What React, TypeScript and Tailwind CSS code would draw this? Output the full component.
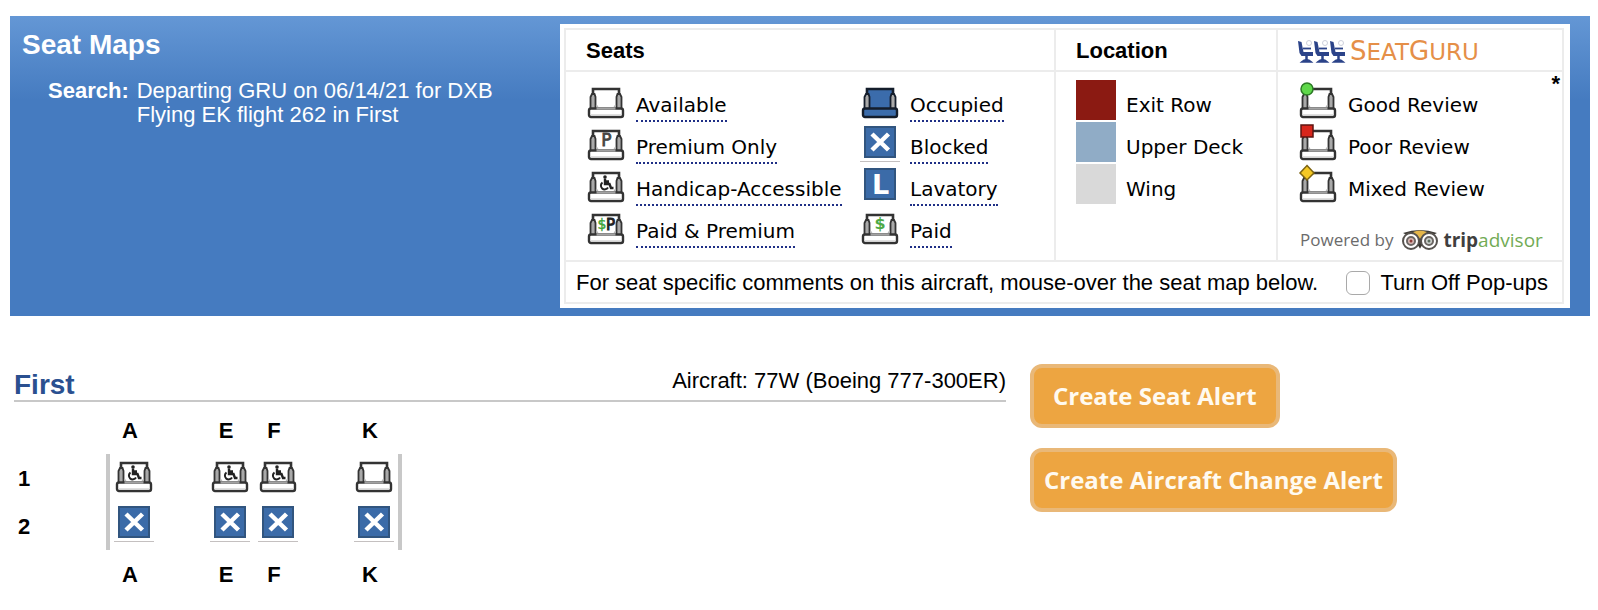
import { useState } from 'react';
import type { ReactNode } from 'react';

type Review = 'good' | 'poor' | 'mixed';
type SeatKind = 'available' | 'premium' | 'handicap' | 'paidPremium' | 'occupied' | 'blocked' | 'lavatory' | 'paid';

const seatLegend: { kind: SeatKind; label: string }[] = [
  { kind: 'available', label: 'Available' },
  { kind: 'occupied', label: 'Occupied' },
  { kind: 'premium', label: 'Premium Only' },
  { kind: 'blocked', label: 'Blocked' },
  { kind: 'handicap', label: 'Handicap-Accessible' },
  { kind: 'lavatory', label: 'Lavatory' },
  { kind: 'paidPremium', label: 'Paid & Premium' },
  { kind: 'paid', label: 'Paid' },
];

const locations = [
  { label: 'Exit Row', color: 'bg-[#8b1a12]' },
  { label: 'Upper Deck', color: 'bg-[#90acc6]' },
  { label: 'Wing', color: 'bg-[#d9d9d9]' },
];

const reviews: { kind: Review; label: string }[] = [
  { kind: 'good', label: 'Good Review' },
  { kind: 'poor', label: 'Poor Review' },
  { kind: 'mixed', label: 'Mixed Review' },
];

// empty string = aisle
const columns = ['A', '', 'E', 'F', '', 'K'];

const rows: { number: number; seats: (SeatKind | null)[] }[] = [
  { number: 1, seats: ['handicap', null, 'handicap', 'handicap', null, 'available'] },
  { number: 2, seats: ['blocked', null, 'blocked', 'blocked', null, 'blocked'] },
];

function Chair({ filled = false, children }: { filled?: boolean; children?: ReactNode }) {
  const line = filled ? '#141d2b' : '#333333';
  const fill = filled ? '#3b6cab' : '#ffffff';
  return (
    <svg viewBox="0 0 40 40" className="block size-10 shrink-0" aria-hidden="true">
      <path d="M7 29V9H33V29Z" fill={fill} />
      <path d="M7 15V9H33V15" fill="none" stroke={line} strokeWidth="2.600" />
      <path d="M4.500 29V17L6 14H8.500L9.500 17V29Z" fill="#a9a9a9" stroke={line} strokeWidth="1.800" />
      <path d="M35.500 29V17L34 14H31.500L30.500 17V29Z" fill="#a9a9a9" stroke={line} strokeWidth="1.800" />
      {!filled && <path d="M10.500 25Q11 28 14 28H26Q29 28 29.500 25" fill="none" stroke="#b5b5b5" strokeWidth="1.500" />}
      <rect x="3" y="28.500" width="34" height="8.500" rx="2" fill={fill} stroke={line} strokeWidth="2.400" />
      {!filled && <path d="M10.500 28.500H29.500" stroke="#a2a2a2" strokeWidth="2.400" />}
      {!filled && <path d="M5 35H35" stroke="#d6d6d6" strokeWidth="1.500" />}
      {children}
    </svg>
  );
}

function Tile({ children, underline = false }: { children: ReactNode; underline?: boolean }) {
  return (
    <svg viewBox="0 0 40 40" className="block size-10 shrink-0" aria-hidden="true">
      <rect x="5" y="5" width="30" height="30" fill="#3b6ba8" stroke="#31557f" strokeWidth="2" />
      {children}
      {underline && <path d="M0 39.500H40" stroke="#c4c0c0" />}
    </svg>
  );
}

function SeatIcon({ kind }: { kind: SeatKind }) {
  const glyph = "font-['DejaVu_Sans']";
  switch (kind) {
    case 'occupied':
      return <Chair filled />;
    case 'premium':
      return (
        <Chair>
          <text x="20.500" y="24" textAnchor="middle" fontSize="17" fill="#454545" stroke="#454545" strokeWidth="0.800" className={glyph}>P</text>
        </Chair>
      );
    case 'handicap':
      return (
        <Chair>
          <g fill="none" stroke="#222" strokeWidth="2.400">
            <circle cx="19" cy="13" r="1.800" fill="#222" stroke="none" />
            <path d="M19 14.500V20H23.500L25 24H27.500M19 17.500H23" />
            <path d="M16.500 18.500A3.800 3.800 0 1 0 22 23.500" strokeWidth="2" />
          </g>
        </Chair>
      );
    case 'paidPremium':
      return (
        <Chair>
          <text x="16" y="23" textAnchor="middle" fontSize="14" fill="#3fa63a" stroke="#3fa63a" strokeWidth="0.500" className={glyph}>$</text>
          <text x="24.500" y="24" textAnchor="middle" fontSize="15" fill="#222" stroke="#222" strokeWidth="0.900" className={glyph}>P</text>
        </Chair>
      );
    case 'paid':
      return (
        <Chair>
          <text x="20" y="23" textAnchor="middle" fontSize="16" fontWeight="bold" fill="#4daa46" className={glyph}>$</text>
        </Chair>
      );
    case 'blocked':
      return (
        <Tile underline>
          <path d="M12 12L28.500 28M28.500 12L12 28" stroke="#fff" strokeWidth="4.500" />
        </Tile>
      );
    case 'lavatory':
      return (
        <Tile>
          <text x="20.500" y="30" textAnchor="middle" fontSize="27" fontWeight="bold" fill="#fff" className={glyph}>L</text>
        </Tile>
      );
    default:
      return <Chair />;
  }
}

function ReviewIcon({ kind }: { kind: Review }) {
  return (
    <Chair>
      {kind === 'good' && <circle cx="9" cy="9" r="6" fill="#5fd84a" stroke="#2c7a25" strokeWidth="1.500" />}
      {kind === 'poor' && <rect x="3" y="3" width="12" height="12" fill="#d8261c" stroke="#5e1511" strokeWidth="1.500" />}
      {kind === 'mixed' && <path d="M9 1.500L16 9L9 16L2 9Z" fill="#f5c824" stroke="#7d6412" strokeWidth="1.500" />}
    </Chair>
  );
}

function SeatGuruLogo() {
  return (
    <div className="flex items-center gap-1">
      <svg viewBox="0 0 48 26" className="h-[26px] w-12" aria-hidden="true">
        {[0, 16, 32].map((x) => (
          <g key={x} transform={`translate(${x} 0)`}>
            <circle cx="11" cy="5" r="2.500" fill="none" stroke="#cdd0dc" />
            <path d="M0 3L3.500 4L5.500 14H15V18H3.500L1.500 15Z" fill="#2b4389" />
            <path d="M5 10.500H13" stroke="#2b4389" strokeWidth="1.800" />
            <path d="M8.500 18V22" stroke="#2b4389" strokeWidth="2.500" />
            <path d="M3.500 24Q8.500 19.500 13.500 24Z" fill="#2b4389" stroke="#2b4389" strokeWidth="1.500" />
          </g>
        ))}
      </svg>
      <span className="font-['DejaVu_Sans'] text-[26px] leading-6 text-[#e58f48]">
        S<span className="text-[23px]">EAT</span>G<span className="text-[23px]">URU</span>
      </span>
    </div>
  );
}

function TripAdvisorCredit() {
  return (
    <div className="flex items-center gap-1 whitespace-nowrap font-['Open_Sans'] leading-6">
      <span className="pr-1 text-[17px] text-[#6b6b6b]">Powered by</span>
      <svg viewBox="0 0 38 20" className="h-5 w-[38px]" aria-hidden="true">
        <path d="M2 3Q19 -3 36 3L30 6L19 18L8 6Z" fill="#3d3a35" />
        <path d="M12 2Q19 -1 26 2L19 9Z" fill="#e5b64a" />
        <circle cx="10" cy="11" r="8" fill="#fff" stroke="#57534f" strokeWidth="2" />
        <circle cx="28" cy="11" r="8" fill="#fff" stroke="#57534f" strokeWidth="2" />
        <circle cx="10" cy="11" r="4" fill="#d9b9b5" stroke="#6b6663" strokeWidth="2" />
        <circle cx="28" cy="11" r="4" fill="#cfd3cf" stroke="#6b6663" strokeWidth="2" />
        <circle cx="10" cy="11" r="1.500" fill="#8c3b36" />
        <circle cx="28" cy="11" r="1.500" fill="#5b6b5d" />
        <path d="M17.500 14L19 19L20.500 14Z" fill="#3d3a35" />
      </svg>
      <span className="text-[19px] text-[#72ab55]">
        <span className="font-bold text-[#3f3f3f]">trip</span>advisor
      </span>
    </div>
  );
}

function LegendItem({ icon, label, dotted = false }: { icon: ReactNode; label: string; dotted?: boolean }) {
  return (
    <li className="flex h-[42px] items-end gap-[10px]">
      <div className="self-start">{icon}</div>
      <span
        className={`whitespace-nowrap border-b-2 pb-[3px] font-['DejaVu_Sans'] text-xl leading-6 ${
          dotted ? 'border-dotted border-[#1f2f86]' : 'border-transparent'
        }`}
      >
        {label}
      </span>
    </li>
  );
}

function Legend() {
  const [popupsOff, setPopupsOff] = useState(false);
  const headingClass = 'flex h-[42px] items-center border-b-2 border-[#ececec] pl-5 pt-[2px] font-bold';

  return (
    <div className="ml-auto w-[1010px] shrink-0 bg-white py-1 pl-1 pr-[6px] text-black">
      <div className="border-2 border-[#ececec]">
        <div className="grid grid-cols-[490px_222px_1fr] border-b-2 border-[#ececec]">
          <div className="border-r-2 border-[#ececec]">
            <h2 className={headingClass}>Seats</h2>
            <ul className="grid grid-cols-[274px_1fr] pb-3 pl-5 pt-2">
              {seatLegend.map((item) => (
                <LegendItem key={item.kind} icon={<SeatIcon kind={item.kind} />} label={item.label} dotted />
              ))}
            </ul>
          </div>
          <div className="border-r-2 border-[#ececec]">
            <h2 className={headingClass}>Location</h2>
            <ul className="pl-5 pt-2">
              {locations.map((item) => (
                <LegendItem key={item.label} icon={<div className={`size-10 ${item.color}`} />} label={item.label} />
              ))}
            </ul>
          </div>
          <div className="relative">
            <div className={headingClass}>
              <div className="font-normal">
                <SeatGuruLogo />
              </div>
            </div>
            <span className="absolute right-[2px] top-[42px] font-bold">*</span>
            <ul className="pl-5 pt-2">
              {reviews.map((item) => (
                <LegendItem key={item.kind} icon={<ReviewIcon kind={item.kind} />} label={item.label} />
              ))}
            </ul>
            <div className="pl-[22px] pt-[22px]">
              <TripAdvisorCredit />
            </div>
          </div>
        </div>
        <div className="flex h-10 items-center justify-between pl-[10px] pr-[14px] pt-[2px]">
          <p>For seat specific comments on this aircraft, mouse-over the seat map below.</p>
          <label className="flex items-center gap-[10px]">
            <input
              type="checkbox"
              checked={popupsOff}
              onChange={(e) => setPopupsOff(e.target.checked)}
              className="size-6 appearance-none rounded-md border border-[#a9a9a9] bg-white checked:bg-[#457bc0]"
            />
            Turn Off Pop-ups
          </label>
        </div>
      </div>
    </div>
  );
}

function ColumnLetters() {
  return (
    <tr className="h-12">
      <td />
      <td />
      {columns.map((letter, idx) =>
        letter ? (
          <th key={idx} scope="col" className="pr-2 pt-[2px] text-center">
            {letter}
          </th>
        ) : (
          <td key={idx} />
        )
      )}
      <td />
    </tr>
  );
}

function SeatMap() {
  return (
    <table className="mt-1 w-[388px] table-fixed border-separate border-spacing-0">
      <colgroup>
        <col className="w-[92px]" />
        <col className="w-1" />
        {columns.map((_, idx) => (
          <col key={idx} className="w-12" />
        ))}
        <col className="w-1" />
      </colgroup>
      <thead>
        <ColumnLetters />
      </thead>
      <tbody>
        {rows.map((row) => (
          <tr key={row.number} className="h-12">
            <th scope="row" className="pl-1 pt-[2px] text-left">
              {row.number}
            </th>
            <td className="bg-[#c8c8c8]" />
            {row.seats.map((seat, idx) => (
              <td key={idx} className="pl-1 align-top">
                {seat && <SeatIcon kind={seat} />}
              </td>
            ))}
            <td className="bg-[#c8c8c8]" />
          </tr>
        ))}
      </tbody>
      <tfoot>
        <ColumnLetters />
      </tfoot>
    </table>
  );
}

export default function App() {
  const buttonClass =
    "h-16 rounded-xl border-4 border-[#e9b878] bg-[#eda541] font-['Open_Sans'] text-2xl font-bold text-[#fffaf0]";

  return (
    <div className="min-h-screen bg-white pb-3 pl-[10px] pr-2 pt-4 font-['Liberation_Sans',Arial,sans-serif] text-[22px] leading-6 text-black">
      <header className="flex bg-[#457bc0] bg-[linear-gradient(#6497d5,#457bc0_84px)] py-2 pl-3 pr-5 text-white">
        <div>
          <h1 className="pt-[5px] text-[28px] font-bold leading-8">Seat Maps</h1>
          <dl className="flex gap-2 pl-[26px] pt-[18px]">
            <dt className="font-bold">Search:</dt>
            <dd className="whitespace-nowrap">
              Departing GRU on 06/14/21 for DXB
              <br />
              Flying EK flight 262 in First
            </dd>
          </dl>
        </div>
        <Legend />
      </header>

      <main className="flex gap-6 pl-1 pt-12">
        <section className="w-[992px] pt-[5px]">
          <div className="flex h-[33px] items-start justify-between border-b-2 border-[#c8c8c8]">
            <h2 className="text-[28px] font-bold leading-8 text-[#2a5090]">First</h2>
            <p>Aircraft: 77W (Boeing 777-300ER)</p>
          </div>
          <SeatMap />
        </section>
        <div className="flex flex-col items-start gap-5">
          <button type="button" className={`px-[19px] ${buttonClass}`}>
            Create Seat Alert
          </button>
          <button type="button" className={`px-[10px] ${buttonClass}`}>
            Create Aircraft Change Alert
          </button>
        </div>
      </main>
    </div>
  );
}
